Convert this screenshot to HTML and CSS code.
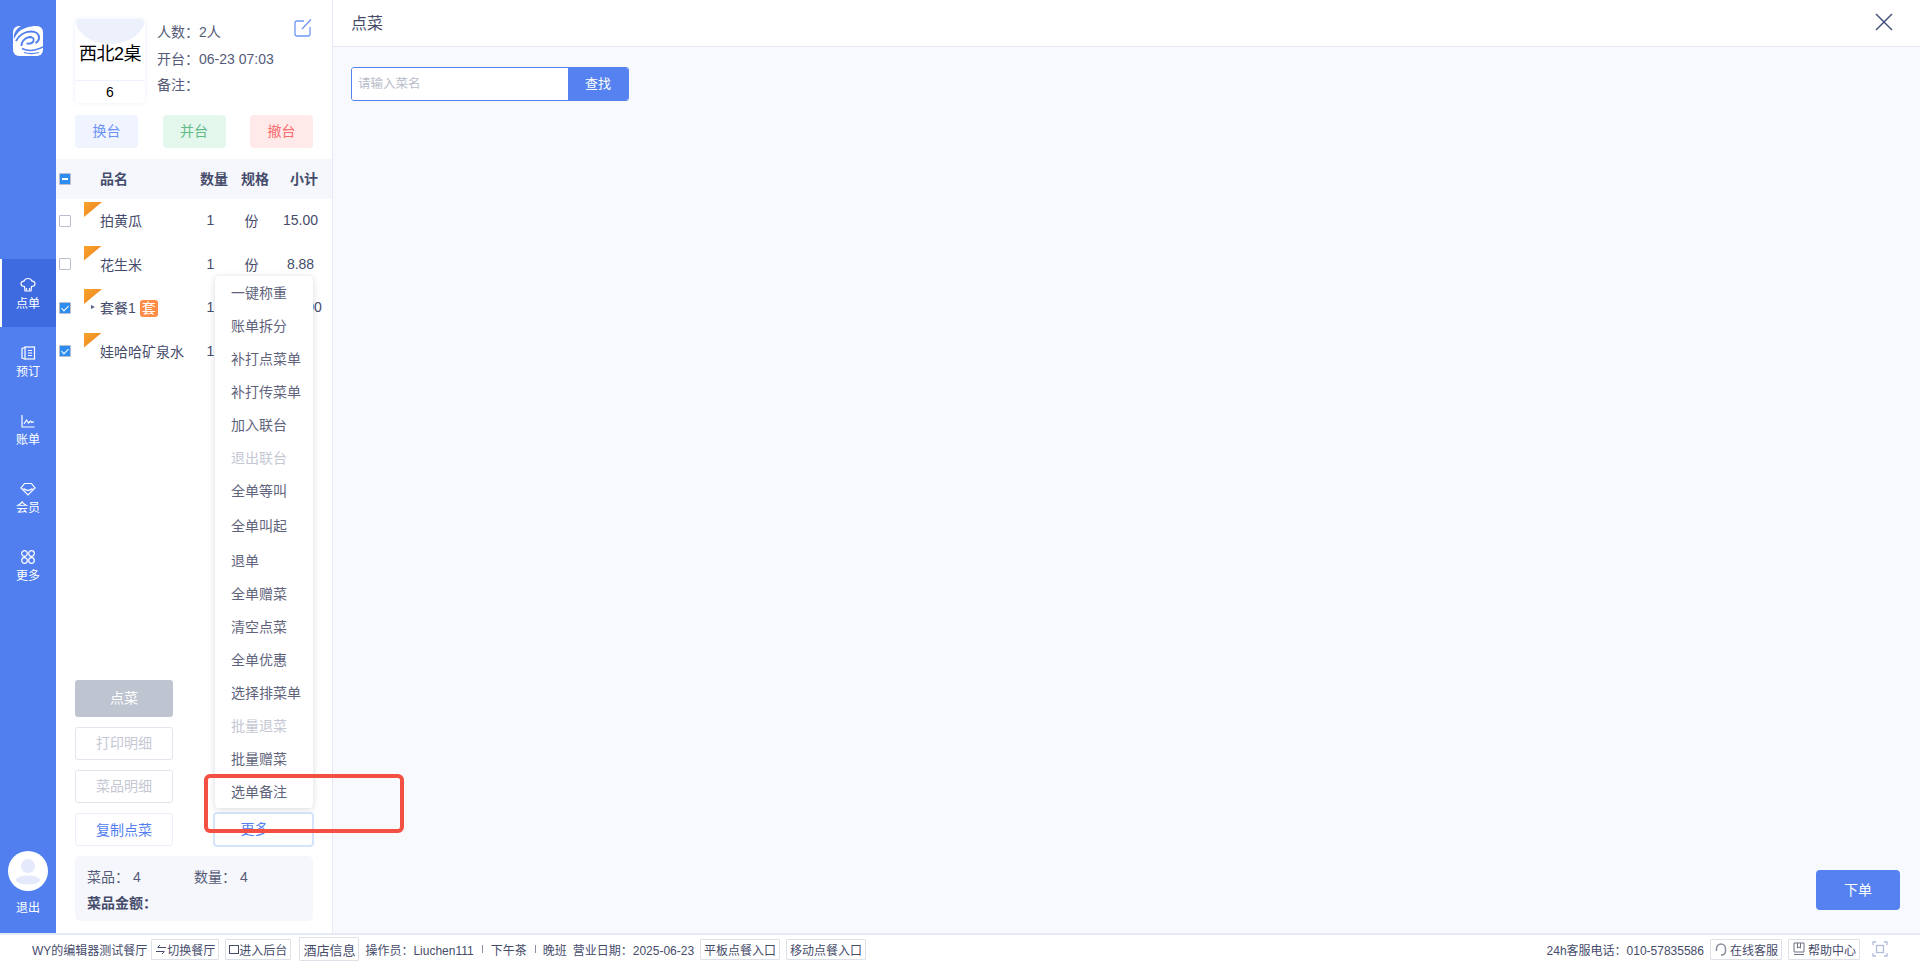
FILE: index.html
```html
<!DOCTYPE html>
<html lang="zh-CN">
  <head>
    <meta charset="UTF-8" />
    <title>点菜</title>
    <link rel="stylesheet" href="styles.css">
  </head>

  <body>
    <div class="app">
      <div class="main">
        <!-- left nav -->
        <nav class="nav">
          <div class="logo">
            <svg width="30" height="30" viewBox="0 0 30 30" fill="none" stroke="#527ff0">
              <rect width="30" height="30" rx="6" fill="#fff" stroke="none"/>
              <path fill="#527ff0" stroke="none" d="M8 0h13c-4 .5-9 1.500-13 4-3 2-5 5-7 9C0 8 3 3 8 0z"/>
              <path stroke-width="2" d="M3 15C6 9 12 5.500 18 5.500c5 0 8 2.500 8 6 0 2.500-1.500 4.500-3.500 5.500"/>
              <path stroke-width="1.800" d="M8.500 20c-.5-4 3-8 8-9 3 0 5 1.500 4 4-1 2-4 3-7 2.500"/>
              <path stroke-width="1.500" d="M9 22.500c5 2.500 13 2.500 21-1.500"/>
              <path stroke-width="1.200" d="M11 26.500c5 1.500 10 1.500 15 0"/>
            </svg>
          </div>
          <div class="nav-items">
            <a class="nav-item active">
              <svg class="nav-icon" viewBox="0 0 16 16" fill="none" stroke="#fff" stroke-width="1.200">
                <path d="M4.500 9.500C2.500 9.500 1 8.200 1 6.600 1 5 2.400 3.900 4 4.100 4.600 2.500 6.100 1.500 8 1.500s3.400 1 4 2.600c1.600-.2 3 .9 3 2.500 0 1.600-1.500 2.900-3.500 2.900l-.5 4.500H5z"/>
                <path d="M6.500 11v2.500M9.500 11v2.500"/>
              </svg>
              <span>点单</span>
            </a>
            <a class="nav-item">
              <svg class="nav-icon" viewBox="0 0 16 16" fill="none" stroke="#fff" stroke-width="1.200">
                <rect x="5" y="2" width="9.500" height="12"/>
                <path d="M5 2.500 2 3.500v9.500l3 1M8 5.500h4M8 8h4M8 10.500h4"/>
              </svg>
              <span>预订</span>
            </a>
            <a class="nav-item">
              <svg class="nav-icon" viewBox="0 0 16 16" fill="none" stroke="#fff" stroke-width="1.200">
                <path d="M2 2v12h12.500M4 11l2.500-4 2 3 2-2 1.500 1.500 2-1"/>
              </svg>
              <span>账单</span>
            </a>
            <a class="nav-item">
              <svg class="nav-icon" viewBox="0 0 16 16" fill="none" stroke="#fff" stroke-width="1.200">
                <path d="M4.500 2.500h7L15 7l-7 7-7-7zM3.500 7.500c2.500 2.500 6.500 2.500 9 0"/>
              </svg>
              <span>会员</span>
            </a>
            <a class="nav-item">
              <svg class="nav-icon" viewBox="0 0 16 16" fill="none" stroke="#fff" stroke-width="1.200">
                <circle cx="4.500" cy="4.500" r="2.800"/>
                <circle cx="11.500" cy="4.500" r="2.800"/>
                <circle cx="4.500" cy="11.500" r="2.800"/>
                <circle cx="11.500" cy="11.500" r="2.800"/>
              </svg>
              <span>更多</span>
            </a>
          </div>
          <div class="user">
            <div class="avatar">
              <svg width="40" height="40" viewBox="0 0 40 40">
                <circle cx="20" cy="15" r="7" fill="#e4e9fb"/>
                <ellipse cx="20" cy="29" rx="12" ry="4.500" fill="#e4e9fb"/>
              </svg>
            </div>
            <span>退出</span>
          </div>
        </nav>

        <!-- order panel -->
        <aside class="panel">
          <div class="table-info">
            <div class="table-card">
              <div class="table-top"><span>西北2桌</span></div>
              <div class="table-num">6</div>
            </div>
            <div class="info-lines">
              <p>人数：2人</p>
              <p>开台：06-23 07:03</p>
              <p>备注：</p>
            </div>
            <svg class="edit-icon" width="18" height="18" viewBox="0 0 18 18" fill="none" stroke="#6f96f4" stroke-width="1.300">
              <path d="M10 2H3a2 2 0 0 0-2 2v11a2 2 0 0 0 2 2h11a2 2 0 0 0 2-2V8M8 10l9-9.500"/>
            </svg>
          </div>

          <div class="table-actions">
            <a class="soft-btn blue">换台</a>
            <a class="soft-btn green">并台</a>
            <a class="soft-btn red">撤台</a>
          </div>

          <div class="row head">
            <span class="check mixed"></span>
            <span class="name">品名</span>
            <span class="cell">数量</span>
            <span class="cell">规格</span>
            <span class="cell">小计</span>
          </div>
          <div class="row">
            <i class="corner"></i>
            <span class="check"></span>
            <span class="name">拍黄瓜</span>
            <span class="cell">1</span>
            <span class="cell">份</span>
            <span class="cell">15.00</span>
          </div>
          <div class="row">
            <i class="corner"></i>
            <span class="check"></span>
            <span class="name">花生米</span>
            <span class="cell">1</span>
            <span class="cell">份</span>
            <span class="cell">8.88</span>
          </div>
          <div class="row">
            <i class="corner"></i>
            <span class="check on"></span>
            <span class="name"><i class="arrow"></i>套餐1<b class="tag">套</b></span>
            <span class="cell">1</span>
            <span class="cell"></span>
            <span class="cell">100.00</span>
          </div>
          <div class="row">
            <i class="corner"></i>
            <span class="check on"></span>
            <span class="name">娃哈哈矿泉水</span>
            <span class="cell">1</span>
            <span class="cell"></span>
            <span class="cell"></span>
          </div>

          <div class="spacer"></div>

          <div class="actions">
            <a class="btn solid-grey tall">点菜</a>
            <a class="btn solid-blue tall"></a>
            <a class="btn disabled">打印明细</a>
            <a class="btn disabled"></a>
            <a class="btn disabled">菜品明细</a>
            <a class="btn disabled"></a>
            <a class="btn link">复制点菜</a>
            <a class="btn more">更多 ···</a>
          </div>

          <div class="summary">
            <div class="summary-line"><span>菜品：&nbsp;4</span><span>数量：&nbsp;4</span></div>
            <div class="summary-total">菜品金额：</div>
          </div>

          <!-- dropdown of the 更多 button -->
          <ul class="menu">
            <li>一键称重</li>
            <li>账单拆分</li>
            <li>补打点菜单</li>
            <li>补打传菜单</li>
            <li>加入联台</li>
            <li class="off">退出联台</li>
            <li>全单等叫</li>
            <li class="gap">全单叫起</li>
            <li class="gap">退单</li>
            <li>全单赠菜</li>
            <li>清空点菜</li>
            <li>全单优惠</li>
            <li>选择排菜单</li>
            <li class="off">批量退菜</li>
            <li>批量赠菜</li>
            <li>选单备注</li>
          </ul>
          <div class="red-mark"></div>
        </aside>

        <!-- dish picker -->
        <section class="picker">
          <header class="picker-head">
            <span>点菜</span>
            <svg width="18" height="18" viewBox="0 0 18 18" stroke="#44507a" stroke-width="1.500">
              <path d="M1 1l16 16M17 1 1 17"/>
            </svg>
          </header>
          <div class="picker-body">
            <form class="search">
              <input type="text" placeholder="请输入菜名" />
              <button type="button">查找</button>
            </form>
            <div class="picker-foot">
              <a class="submit">下单</a>
            </div>
          </div>
        </section>
      </div>

      <!-- status bar -->
      <footer class="bar">
        <div class="bar-group">
          <span class="shop">WY的编辑器测试餐厅</span>
          <a class="bar-btn">
            <svg width="12" height="11" viewBox="0 0 12 11" fill="none" stroke="#464c6b"><path d="M11 3.500H3M5 1 2.500 3.500M1 7.500h8M7 10l2.500-2.500"/></svg>切换餐厅
          </a>
          <a class="bar-btn">
            <svg width="10" height="11" viewBox="0 0 10 11" fill="none" stroke="#464c6b"><rect x=".5" y="1.500" width="9" height="8"/></svg>进入后台
          </a>
          <a class="bar-btn big">酒店信息</a>
          <span>操作员：Liuchen111</span>
          <span class="sep"></span>
          <span>下午茶</span>
          <span class="sep near"></span>
          <span>晚班</span>
          <span>营业日期：2025-06-23</span>
          <a class="bar-btn">平板点餐入口</a>
          <a class="bar-btn">移动点餐入口</a>
        </div>
        <div class="bar-group">
          <span>24h客服电话：010-57835586</span>
          <a class="bar-btn wide">
            <svg width="14" height="14" viewBox="0 0 14 14" fill="none" stroke="#8a8f9f" stroke-width="1.500"><path d="M2.500 9V6.500a4.500 4.500 0 0 1 9 0V9M7 13c3 0 4.500-1.500 4.500-4"/></svg>在线客服
          </a>
          <a class="bar-btn wide">
            <svg width="14" height="14" viewBox="0 0 14 14" fill="none" stroke="#6d7285"><path d="M2 1h10v9H2zM2 12.500h10M5.500 1v5L7 5l1.500 1V1"/></svg>帮助中心
          </a>
          <svg class="full-icon" width="16" height="16" viewBox="0 0 16 16" fill="none" stroke="#b4bcdc" stroke-width="1.300">
            <path d="M1 4V1h3M12 1h3v3M15 12v3h-3M4 15H1v-3"/>
            <rect x="4.500" y="4.500" width="7" height="7"/>
          </svg>
        </div>
      </footer>
    </div>
  </body>
</html>
```

FILE: styles.css
```css
* {
  margin: 0;
  padding: 0;
  box-sizing: border-box;
  font-family: "Liberation Sans", "Noto Sans CJK SC", sans-serif;
}

body {
  background-color: #ffffff;
  color: #464c6b;
  font-size: 14px;
}

.app {
  display: flex;
  flex-direction: column;
  height: 100vh;
  overflow: hidden;
}

.main {
  display: flex;
  flex: 1;
  min-height: 0;
}

/* left nav */
.nav {
  display: flex;
  flex-direction: column;
  width: 56px;
  background-color: #527ff0;
  color: #ffffff;
  font-size: 12px;
}

.logo {
  display: flex;
  justify-content: center;
  padding-top: 26px;
  height: 259px;
}

.nav-items {
  flex: 1;
}

.nav-item {
  display: flex;
  flex-direction: column;
  align-items: center;
  justify-content: center;
  height: 68px;
  padding-top: 2px;
  gap: 1px;
}

.nav-item.active {
  background-color: #3f6be0;
  border-left: 2px solid #ffffff;
  padding-right: 2px;
}

.nav-icon {
  width: 16px;
  height: 16px;
}

.user {
  display: flex;
  flex-direction: column;
  align-items: center;
  gap: 7px;
  height: 82px;
}

.avatar {
  width: 40px;
  height: 40px;
  border-radius: 50%;
  background-color: #ffffff;
}

/* order panel */
.panel {
  position: relative;
  display: flex;
  flex-direction: column;
  width: 277px;
  border-right: 1px solid #e6e9f8;
  padding-top: 19px;
}

.table-info {
  display: flex;
  padding: 0 19px;
  height: 84px;
}

.table-card {
  display: flex;
  flex-direction: column;
  width: 70px;
  height: 84px;
  border-radius: 5px;
  color: #000000;
  box-shadow: 0 0 5px rgba(100, 130, 220, 0.12);
}

.table-top {
  flex: 1;
  display: flex;
  align-items: center;
  justify-content: center;
  padding-top: 5px;
  font-size: 18px;
  border-bottom: 1px solid #ecf1fd;
  border-radius: 5px 5px 0 0;
  background: radial-gradient(ellipse 35px 25px at 50% 0, #edf1fc 99%, transparent 100%);
}

.table-top span {
  white-space: nowrap;
  letter-spacing: -0.5px;
}

.table-num {
  height: 22px;
  line-height: 22px;
  text-align: center;
}

.info-lines {
  flex: 1;
  padding: 2px 0 0 12px;
  color: #555b78;
}

.info-lines p {
  height: 26.500px;
  line-height: 22px;
}

.edit-icon {
  margin-right: 1px;
}

.table-actions {
  display: flex;
  justify-content: space-between;
  margin-top: 12px;
  padding: 0 19px;
}

.soft-btn {
  width: 63px;
  height: 33px;
  line-height: 33px;
  border-radius: 4px;
  text-align: center;
}

.soft-btn.blue {
  background-color: #f0f4fe;
  color: #6c93f5;
}

.soft-btn.green {
  background-color: #e4f7ed;
  color: #5fbc86;
}

.soft-btn.red {
  background-color: #ffe9e9;
  color: #f96e6e;
}

.row {
  position: relative;
  display: grid;
  grid-template-columns: 44px 88px 45px 37px 61px;
  align-items: center;
  height: 43.500px;
}

.row.head {
  grid-template-columns: 44px 92px 44px 38px 60px;
  height: 40px;
  margin-top: 11px;
  background-color: #f5f7fc;
  font-weight: bold;
}

.row.head .name,
.row.head .cell {
  padding-bottom: 2px;
}

.check {
  display: block;
  width: 12px;
  height: 12px;
  margin-left: 3px;
  border: 1px solid #b9bfd1;
  border-radius: 1px;
  background-color: #ffffff;
}

.check.on,
.check.mixed {
  position: relative;
  background-color: #2d8cf0;
}

.check.mixed::after {
  content: "";
  position: absolute;
  left: 2px;
  top: 4px;
  width: 6px;
  height: 2px;
  background-color: #ffffff;
}

.check.on::after {
  content: "";
  position: absolute;
  left: 3px;
  top: 1px;
  width: 3px;
  height: 6px;
  border: solid #ffffff;
  border-width: 0 1.500px 1.500px 0;
  transform: rotate(45deg);
}

.name {
  position: relative;
  padding-bottom: 1px;
  white-space: nowrap;
}

.cell {
  padding-bottom: 1px;
  text-align: center;
  white-space: nowrap;
}

.corner {
  position: absolute;
  left: 28px;
  top: 3px;
  width: 18px;
  height: 15px;
  background: linear-gradient(135deg, #f7a52b, #ee7c20);
  clip-path: polygon(0 0, 100% 0, 0 100%);
}

.arrow {
  position: absolute;
  left: -9px;
  top: 8px;
  border-left: 4px solid #5a6388;
  border-top: 2.500px solid transparent;
  border-bottom: 2.500px solid transparent;
}

.tag {
  display: inline-block;
  width: 18px;
  height: 17px;
  line-height: 17px;
  margin-left: 4px;
  border-radius: 3px;
  background-color: #ff8b45;
  color: #ffffff;
  font-weight: normal;
  text-align: center;
}

.spacer {
  flex: 1;
}

.actions {
  display: grid;
  grid-template-columns: 98px 98px;
  justify-content: space-between;
  gap: 10px 42px;
  padding: 0 19px;
}

.btn {
  height: 33px;
  line-height: 31px;
  border: 1px solid #e2e5ee;
  border-radius: 3px;
  text-align: center;
}

.btn.tall {
  height: 37px;
  line-height: 37px;
  border: 0;
  color: #ffffff;
}

.solid-grey {
  background-color: #bfc4d1;
}

.solid-blue {
  background-color: #527ff0;
}

.btn.disabled {
  color: #c5c8d3;
}

.btn.link {
  line-height: 33px;
  color: #527ff0;
  border-color: #eaedfa;
}

.btn.more {
  margin: -1px -1px -2px -2px;
  height: 35px;
  line-height: 31px;
  color: #527ff0;
  border: 2px solid #d6e4fb;
  border-radius: 4px;
}

.summary {
  margin: 10px 19px 12px;
  height: 65px;
  padding: 10px 12px 0;
  border-radius: 5px;
  background-color: #f5f7fc;
}

.summary-line {
  display: grid;
  grid-template-columns: 107px 1fr;
  height: 26px;
  line-height: 22px;
  color: #555b78;
}

.summary-total {
  line-height: 22px;
  font-weight: bold;
}

/* dropdown */
.menu {
  position: absolute;
  left: 159px;
  top: 276px;
  width: 98px;
  height: 532px;
  padding-top: 1px;
  list-style: none;
  border-radius: 4px;
  background-color: #ffffff;
  box-shadow: 0 1px 6px rgba(70, 76, 107, 0.22);
}

.menu li {
  height: 33px;
  line-height: 33px;
  padding-left: 16px;
  color: #5f647c;
  white-space: nowrap;
}

.menu li.gap {
  margin-top: 2px;
}

.menu li.off {
  color: #c5c8d3;
}

.red-mark {
  position: absolute;
  left: 148px;
  top: 774px;
  width: 200px;
  height: 59px;
  border: 4px solid #f44f43;
  border-radius: 6px;
}

/* dish picker */
.picker {
  flex: 1;
  display: flex;
  flex-direction: column;
}

.picker-head {
  display: flex;
  align-items: center;
  justify-content: space-between;
  height: 47px;
  padding: 0 27px 3px 18px;
  border-bottom: 1px solid #e6e9f8;
  font-size: 16px;
}

.picker-body {
  flex: 1;
  display: flex;
  flex-direction: column;
  justify-content: space-between;
  padding: 20px 20px 23px 18px;
  background-color: #f8f9fc;
}

.search {
  display: flex;
  width: 278px;
  height: 34px;
  border: 1px solid #5582f0;
  border-radius: 3px;
  overflow: hidden;
}

.search input {
  flex: 1;
  min-width: 0;
  padding-left: 6px;
  border: 0;
  outline: 0;
  font-size: 12.500px;
}

.search input::placeholder {
  color: #b9bccb;
}

.search button {
  width: 60px;
  padding-bottom: 3px;
  border: 0;
  background-color: #5582f0;
  color: #ffffff;
  font-size: 13px;
}

.picker-foot {
  display: flex;
  justify-content: flex-end;
}

.submit {
  width: 84px;
  height: 40px;
  line-height: 40px;
  border-radius: 4px;
  background-color: #5582f0;
  color: #ffffff;
  text-align: center;
}

/* status bar */
.bar {
  display: flex;
  align-items: center;
  justify-content: space-between;
  height: 30px;
  padding: 0 32px;
  border-top: 2px solid #e6e9f8;
  font-size: 12px;
}

.bar-group {
  display: flex;
  align-items: center;
  gap: 6px;
}

.shop {
  margin-right: -2px;
}

.bar-btn {
  display: flex;
  align-items: center;
  height: 21px;
  padding: 0 3px;
  border: 1px solid #dfe1e8;
  border-radius: 1px;
  white-space: nowrap;
}

.bar-btn.big {
  height: 24px;
  margin-left: 2px;
  font-size: 13px;
}

.bar-btn.wide {
  gap: 2px;
}

.sep {
  width: 1px;
  height: 8px;
  margin: 0 2px;
  background-color: #8a8f9f;
}

.sep.near {
  margin-right: 1px;
}

.full-icon {
  margin-left: 6px;
}
```
